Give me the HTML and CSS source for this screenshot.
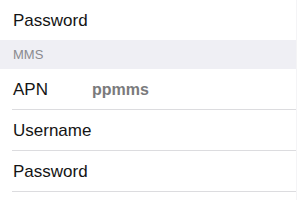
FILE: index.html
```html
<!DOCTYPE html>
<html>
<head>
<meta charset="utf-8">
<link rel="stylesheet" href="styles.css">
</head>
<body>
<div class="list">
  <div class="cell top"><div class="cell-inner no-line"><span class="label">Password</span></div></div>
  <div class="section-header">MMS</div>
  <div class="cell"><div class="cell-inner"><span class="label">APN</span><span class="value">ppmms</span></div></div>
  <div class="cell"><div class="cell-inner"><span class="label">Username</span></div></div>
  <div class="cell"><div class="cell-inner"><span class="label">Password</span></div></div>
</div>
</body>
</html>
```
FILE: styles.css
```css
html, body {
  margin: 0;
  padding: 0;
  background: #ffffff;
}
body {
  font-family: "Liberation Sans", Arial, sans-serif;
  color: #141414;
  width: 300px;
  height: 200px;
  overflow: hidden;
}
.list {
  width: 296px;
  border-right: 1px solid #f4f4f6;
  height: 200px;
}
.cell {
  padding-left: 12px;
}
.cell-inner {
  height: 38px;
  padding-top: 2px;
  line-height: 38px;
  padding-left: 1px;
  border-bottom: 1px solid #dcdcdf;
  font-size: 17px;
  white-space: nowrap;
}
.cell-inner.no-line {
  border-bottom: none;
}
.label {
  display: inline-block;
  width: 79px;
}
.value {
  font-size: 16px;
  font-weight: bold;
  color: #7a7a7c;
}
.section-header {
  height: 29px;
  line-height: 30px;
  background: #efeff4;
  padding-left: 13px;
  font-size: 13px;
  color: #8a8a8f;
}
```
